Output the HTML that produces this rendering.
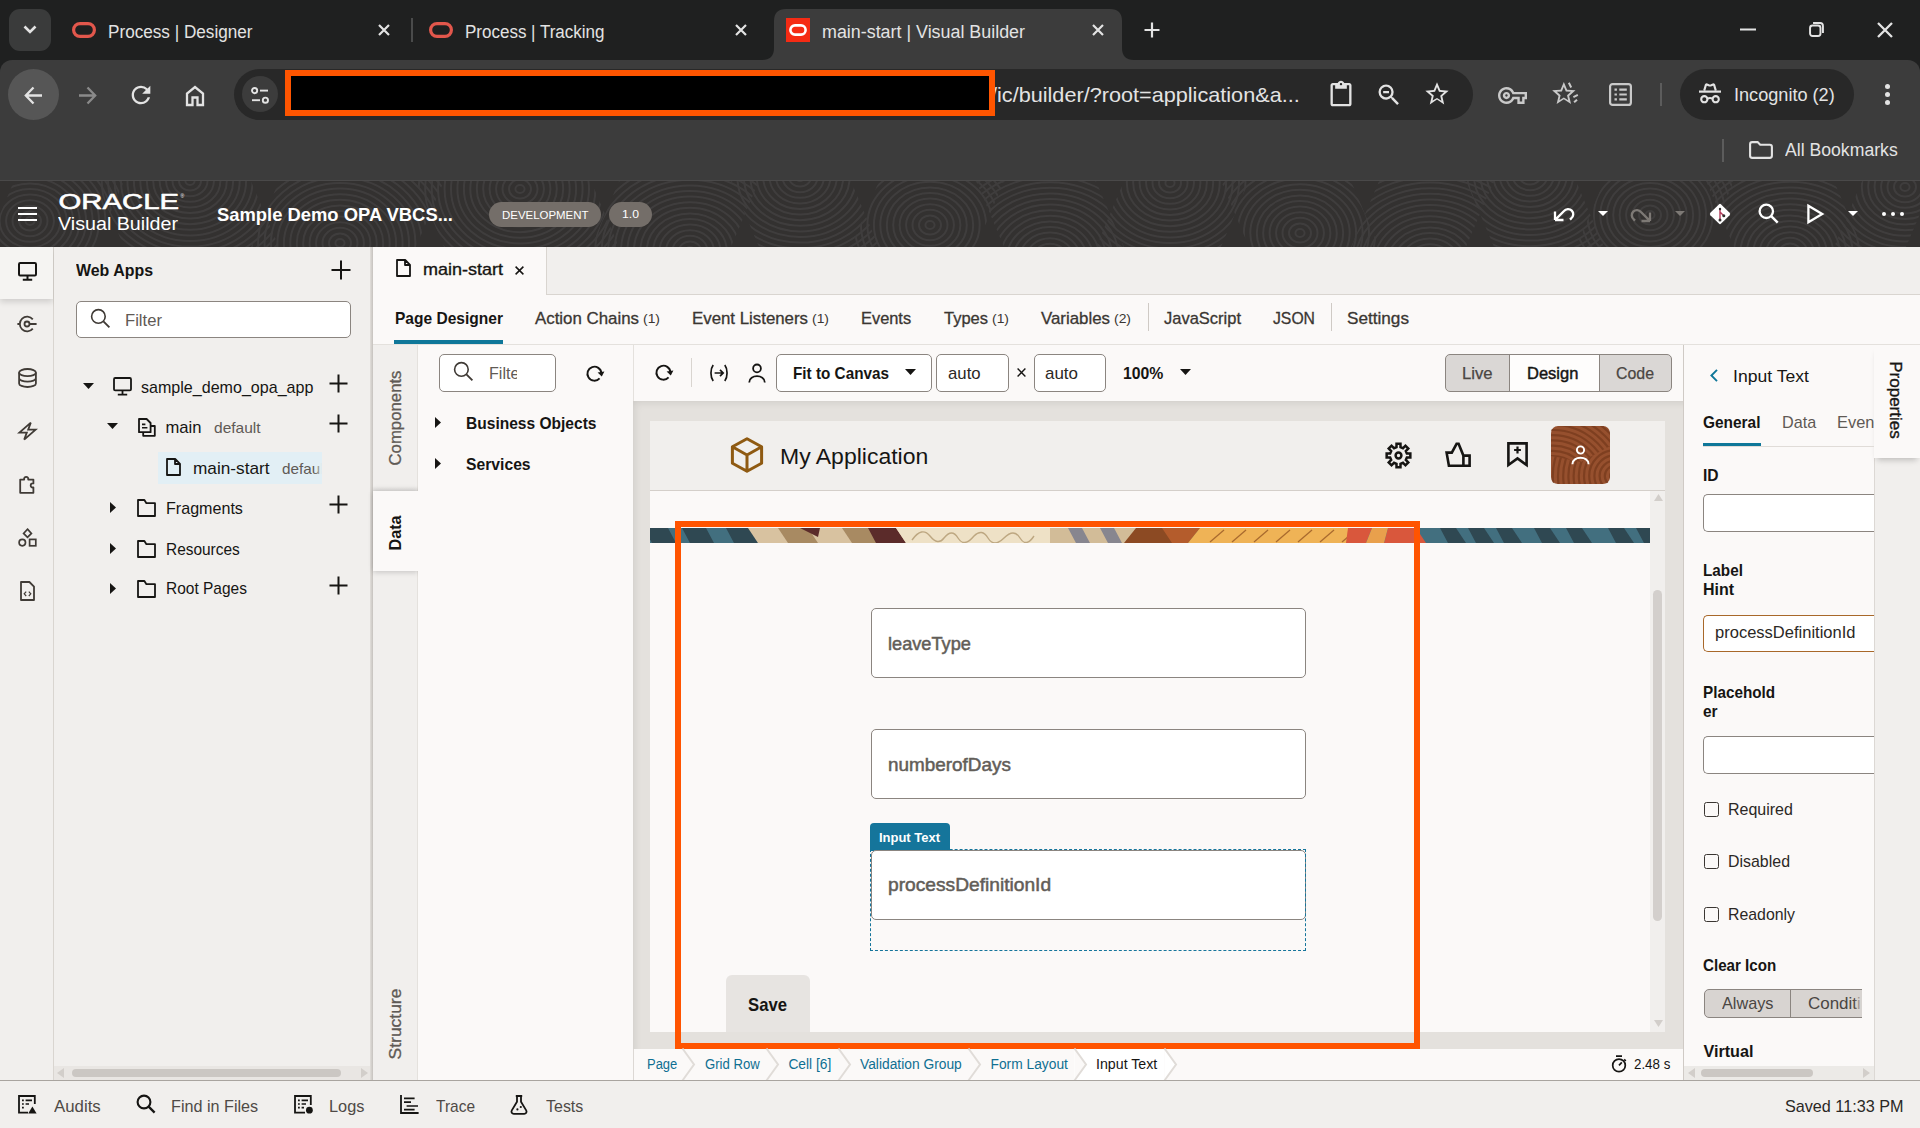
<!DOCTYPE html>
<html lang="en">
<head>
<meta charset="utf-8">
<title>main-start | Visual Builder</title>
<style>
*{box-sizing:border-box;margin:0;padding:0}
html,body{width:1920px;height:1128px;overflow:hidden;background:#f1efed}
body{font-family:"Liberation Sans",sans-serif;color:#161513;font-size:16px;line-height:1}
#root{position:relative;width:1920px;height:1128px;overflow:hidden}
.a{position:absolute}
.t{position:absolute;white-space:nowrap;line-height:1}
svg{position:absolute;overflow:visible}
#tabstrip{left:0;top:0;width:1920px;height:80px;background:#1f2020}
#toolbar{left:0;top:60px;width:1920px;height:120px;background:#3c3c3c;border-top-left-radius:12px;border-top-right-radius:12px}
.ct{color:#e3e3e3;font-size:18px;letter-spacing:-0.35px}
.inp{position:absolute;background:#fff;border:1px solid #8b8580;border-radius:5px}
</style>
</head>
<body>
<div id="root">
<!-- ================= TAB STRIP ================= -->
<div class="a" id="tabstrip"></div>
<div class="a" style="left:9px;top:9px;width:42px;height:42px;border-radius:11px;background:#3a3b3b"></div>
<svg style="left:23px;top:25px" width="14" height="10" viewBox="0 0 14 10"><path d="M1.5 1.5 L7 7 L12.5 1.5" fill="none" stroke="#e3e3e3" stroke-width="2.6"/></svg>

<!-- tab 1 -->
<svg style="left:72px;top:22px" width="24" height="16" viewBox="0 0 24 16"><rect x="1.6" y="1.6" width="20.8" height="12.8" rx="6.4" fill="none" stroke="#e2574c" stroke-width="3.2"/></svg>
<svg style="left:378px;top:24px" width="12" height="12" viewBox="0 0 12 12"><path d="M1 1 L11 11 M11 1 L1 11" stroke="#e3e3e3" stroke-width="2.2" fill="none"/></svg>
<div class="a" style="left:411px;top:18px;width:2px;height:24px;background:#4a4b4b"></div>
<!-- tab 2 -->
<svg style="left:429px;top:22px" width="24" height="16" viewBox="0 0 24 16"><rect x="1.6" y="1.6" width="20.8" height="12.8" rx="6.4" fill="none" stroke="#e2574c" stroke-width="3.2"/></svg>
<svg style="left:735px;top:24px" width="12" height="12" viewBox="0 0 12 12"><path d="M1 1 L11 11 M11 1 L1 11" stroke="#e3e3e3" stroke-width="2.2" fill="none"/></svg>
<!-- active tab -->
<svg style="left:762px;top:9px" width="372" height="51" viewBox="0 0 372 51"><path d="M0 51 C8 51 12 47 12 39 L12 12 C12 4 16 0 24 0 L348 0 C356 0 360 4 360 12 L360 39 C360 47 364 51 372 51 Z" fill="#3c3c3c"/></svg>
<div class="a" style="left:786px;top:18px;width:24px;height:24px;background:#f52b14"></div>
<svg style="left:789px;top:24px" width="18" height="12" viewBox="0 0 18 12"><rect x="1.4" y="1.4" width="15.2" height="9.2" rx="4.6" fill="#f52b14" stroke="#fff" stroke-width="2.6"/></svg>
<svg style="left:1092px;top:24px" width="12" height="12" viewBox="0 0 12 12"><path d="M1 1 L11 11 M11 1 L1 11" stroke="#e3e3e3" stroke-width="2.2" fill="none"/></svg>
<svg style="left:1144px;top:22px" width="16" height="16" viewBox="0 0 16 16"><path d="M8 0.5 V15.5 M0.5 8 H15.5" stroke="#e3e3e3" stroke-width="2.2" fill="none"/></svg>
<!-- window controls -->
<svg style="left:1740px;top:28px" width="16" height="3" viewBox="0 0 16 3"><rect width="16" height="2" y="0.5" fill="#e3e3e3"/></svg>
<svg style="left:1809px;top:22px" width="15" height="15" viewBox="0 0 17 17"><rect x="1.2" y="4" width="11.8" height="11.8" rx="2.8" fill="none" stroke="#e3e3e3" stroke-width="2.2"/><path d="M4.600 1.200 H12.600 a3.200 3.200 0 0 1 3.200 3.200 V12.400" fill="none" stroke="#e3e3e3" stroke-width="2.200"/></svg>
<svg style="left:1877px;top:22px" width="16" height="16" viewBox="0 0 16 16"><path d="M1 1 L15 15 M15 1 L1 15" stroke="#e3e3e3" stroke-width="2.300" fill="none"/></svg>

<!-- ================= TOOLBAR ================= -->
<div class="a" id="toolbar"></div>
<div class="a" style="left:7.500px;top:69px;width:51px;height:51px;border-radius:25.500px;background:#565656"></div>
<!-- back -->
<svg style="left:24px;top:85.500px" width="19" height="19" viewBox="0 0 19 19"><path d="M18 9.5 H2.5 M9.5 1.5 L1.8 9.5 L9.5 17.5" fill="none" stroke="#e3e3e3" stroke-width="2.3"/></svg>
<!-- forward -->
<svg style="left:78px;top:85.500px" width="19" height="19" viewBox="0 0 19 19"><path d="M1 9.5 H16.5 M9.5 1.5 L17.2 9.5 L9.5 17.5" fill="none" stroke="#8a8a8a" stroke-width="2.3"/></svg>
<!-- reload -->
<svg style="left:127px;top:81px" width="28" height="28" viewBox="0 0 24 24"><path fill="#e3e3e3" d="M17.65 6.35A7.958 7.958 0 0012 4c-4.42 0-7.99 3.58-7.99 8s3.57 8 7.99 8c3.73 0 6.84-2.55 7.73-6h-2.08A5.99 5.99 0 0112 18c-3.31 0-6-2.69-6-6s2.69-6 6-6c1.66 0 3.14.69 4.22 1.78L13 11h7V4l-2.35 2.35z"/></svg>
<!-- home -->
<svg style="left:185px;top:85px" width="20" height="21" viewBox="0 0 20 21"><path d="M2 20 V8.5 L10 2 L18 8.5 V20 H12.5 V12.5 H7.5 V20 Z" fill="none" stroke="#e3e3e3" stroke-width="2.3" stroke-linejoin="miter"/></svg>
<!-- omnibox -->
<div class="a" style="left:234px;top:69px;width:1239px;height:51px;border-radius:25.500px;background:#282828"></div>
<div class="a" style="left:242px;top:76px;width:36px;height:36px;border-radius:18px;background:#3c3c3c"></div>
<svg style="left:251px;top:86.500px" width="18" height="17" viewBox="0 0 18 17"><circle cx="3.6" cy="3.6" r="2.6" fill="none" stroke="#e3e3e3" stroke-width="1.9"/><path d="M9 3.6 H17" stroke="#e3e3e3" stroke-width="1.9"/><circle cx="14.4" cy="13.2" r="2.6" fill="none" stroke="#e3e3e3" stroke-width="1.9"/><path d="M1 13.2 H9" stroke="#e3e3e3" stroke-width="1.9"/></svg>
<div class="a" style="left:285px;top:70px;width:710px;height:46px;background:#000;border:6px solid #ff5500"></div>

<!-- omnibox right icons -->
<svg style="left:1327px;top:80px" width="28" height="28" viewBox="0 0 24 24"><path fill="#e3e3e3" d="M19 2.6h-4.18C14.4 1.44 13.3.6 12 .6S9.600 1.440 9.180 2.600H5c-1.1 0-2 .9-2 2v16c0 1.1.9 2 2 2h14c1.1 0 2-.9 2-2v-16c0-1.1-.9-2-2-2zm-7 0c.55 0 1 .45 1 1s-.45 1-1 1-1-.45-1-1 .45-1 1-1zm7 18H5v-16h2v3h10v-3h2v16z"/></svg>
<svg style="left:1375px;top:81px" width="28" height="28" viewBox="0 0 24 24"><path fill="#e3e3e3" d="M15.5 14h-.79l-.28-.27A6.471 6.471 0 0016 9.5 6.5 6.5 0 109.5 16c1.610 0 3.090-.59 4.230-1.570l.27.28v.79l5 4.990L20.490 19l-4.990-5zm-6 0C7.010 14 5 11.990 5 9.500S7.010 5 9.500 5 14 7.010 14 9.500 11.990 14 9.500 14zM7 8.600h5v1.800H7z"/></svg>
<svg style="left:1423px;top:80px" width="28" height="28" viewBox="0 0 24 24"><path fill="#e3e3e3" d="M22 9.240l-7.190-.62L12 2 9.190 8.630 2 9.240l5.460 4.730L5.820 21 12 16.770 18.180 21l-1.630-7.030L22 9.240zM12 15.400l-3.760 2.270 1-4.280-3.320-2.880 4.380-.38L12 6.100l1.710 4.040 4.380.38-3.320 2.880 1 4.280L12 15.400z"/></svg>
<!-- key -->
<svg style="left:1498px;top:81px" width="29" height="29" viewBox="0 0 24 24"><path fill="#c9c9c9" d="M22 19h-6v-4h-2.680c-1.140 2.420-3.600 4-6.320 4-3.860 0-7-3.140-7-7s3.140-7 7-7c2.720 0 5.170 1.580 6.320 4H24v6h-2v4zm-4-2h2v-4h2v-2H11.940l-.23-.67C11.010 8.340 9.110 7 7 7c-2.760 0-5 2.240-5 5s2.240 5 5 5c2.110 0 4.010-1.340 4.710-3.330l.23-.67H18v4zM7 15c-1.650 0-3-1.350-3-3s1.350-3 3-3 3 1.350 3 3-1.350 3-3 3zm0-4c-.55 0-1 .45-1 1s.45 1 1 1 1-.45 1-1-.45-1-1-1z"/></svg>
<!-- star with motion lines -->
<svg style="left:1551px;top:79px" width="28" height="28" viewBox="0 0 24 24"><path fill="#c9c9c9" d="M21 9.740l-7.190-.62L11 2.500 8.190 9.130 1 9.740l5.460 4.730L4.820 21.500 11 17.270 17.180 21.500l-1.630-7.030L21 9.740zM11 15.900l-3.760 2.270 1-4.280-3.320-2.880 4.380-.38L11 6.600l1.710 4.040 4.380.38-3.320 2.880 1 4.280L11 15.900z"/><path d="M15.300 3.200 L17.300 7.300 M19.200 15.600 L23 13.700 M19.800 20 L22.300 17.700" stroke="#c9c9c9" stroke-width="1.7" fill="none"/></svg>
<!-- reading list -->
<svg style="left:1609px;top:83px" width="23" height="23" viewBox="0 0 23 23"><rect x="1.100" y="1.100" width="20.800" height="20.800" rx="2.500" fill="none" stroke="#c9c9c9" stroke-width="2.200"/><path d="M5.500 6.700h2.400M10.300 6.700h7.500M5.500 11.500h2.400M10.300 11.500h7.500M5.500 16.300h2.400M10.300 16.300h7.500" stroke="#c9c9c9" stroke-width="2.200" fill="none"/></svg>
<div class="a" style="left:1660px;top:83px;width:2px;height:23px;background:#5c5c5c"></div>
<!-- incognito pill -->
<div class="a" style="left:1680px;top:69px;width:174px;height:51px;border-radius:25.500px;background:#282828"></div>
<svg style="left:1698px;top:83px" width="24" height="22" viewBox="0 0 24 22"><path d="M6.200 7.600 L7.900 1.900 Q8.100 1.200 8.900 1.500 L10.700 2.300 Q12 2.800 13.300 2.300 L15.100 1.500 Q15.900 1.200 16.100 1.900 L17.800 7.600" fill="none" stroke="#e3e3e3" stroke-width="2.100"/><path d="M1 8.600 H23" stroke="#e3e3e3" stroke-width="2.200"/><circle cx="6.300" cy="16.200" r="3.100" fill="none" stroke="#e3e3e3" stroke-width="2.100"/><circle cx="17.700" cy="16.200" r="3.100" fill="none" stroke="#e3e3e3" stroke-width="2.100"/><path d="M9.400 15.600 Q12 14.300 14.600 15.600" fill="none" stroke="#e3e3e3" stroke-width="2"/></svg>
<!-- kebab -->
<div class="a" style="left:1885px;top:84px;width:5px;height:5px;border-radius:3px;background:#e3e3e3"></div>
<div class="a" style="left:1885px;top:92px;width:5px;height:5px;border-radius:3px;background:#e3e3e3"></div>
<div class="a" style="left:1885px;top:100px;width:5px;height:5px;border-radius:3px;background:#e3e3e3"></div>
<!-- bookmarks bar -->
<div class="a" style="left:1722px;top:139px;width:2px;height:23px;background:#5c5c5c"></div>
<svg style="left:1749px;top:141px" width="24" height="18" viewBox="0 0 24 18"><path d="M1.100 3.200 Q1.100 1.100 3.200 1.100 H8.600 L11.200 3.800 H20.800 Q22.900 3.800 22.900 5.900 V14.800 Q22.900 16.900 20.800 16.900 H3.200 Q1.100 16.900 1.100 14.800 Z" fill="none" stroke="#e3e3e3" stroke-width="2.100"/></svg>
<div class="a" style="left:0;top:179.500px;width:1920px;height:1.500px;background:#4a4949"></div>

<div class="t" style="left:108px;top:23.26px;font-size:18px;color:#e3e3e3;transform:scaleX(0.9523);transform-origin:0 0;">Process | Designer</div>
<div class="t" style="left:465px;top:23.26px;font-size:18px;color:#e3e3e3;transform:scaleX(0.9443);transform-origin:0 0;">Process | Tracking</div>
<div class="t" style="left:822px;top:23.26px;font-size:18px;color:#e3e3e3;transform:scaleX(0.9930);transform-origin:0 0;">main-start | Visual Builder</div>
<div class="a" style="left:995px;top:70px;width:320px;height:48px;overflow:hidden"><div class="t" style="left:-4px;top:13.500px;font-size:21px;color:#e3e3e3;transform:scaleX(1.031);transform-origin:0 0">/ic/builder/?root=application&amp;a...</div></div>
<div class="t" style="left:1734.3px;top:85.96px;font-size:18px;color:#e3e3e3;transform:scaleX(1.0064);transform-origin:0 0;">Incognito (2)</div>
<div class="t" style="left:1785.3px;top:141.06px;font-size:18px;color:#e3e3e3;transform:scaleX(0.9797);transform-origin:0 0;">All Bookmarks</div>
<!-- ================= ORACLE HEADER ================= -->
<div class="a" style="left:0px;top:181px;width:1920px;height:66px;background:#333130;overflow:hidden"></div>
<svg style="left:0;top:181px;overflow:hidden" width="1920" height="66" viewBox="0 0 1920 66"><defs><clipPath id="hc0"><polygon points="14,0 124,0 96,66 -14,66"/></clipPath><clipPath id="hc1"><polygon points="96,0 251,0 279,66 124,66"/></clipPath><clipPath id="hc2"><polygon points="279,0 444,0 416,66 251,66"/></clipPath><clipPath id="hc3"><polygon points="416,0 591,0 619,66 444,66"/></clipPath><clipPath id="hc4"><polygon points="619,0 759,0 731,66 591,66"/></clipPath><clipPath id="hc5"><polygon points="731,0 851,0 879,66 759,66"/></clipPath><clipPath id="hc6"><polygon points="879,0 1004,0 976,66 851,66"/></clipPath><clipPath id="hc7"><polygon points="976,0 1096,0 1124,66 1004,66"/></clipPath><clipPath id="hc8"><polygon points="1124,0 1249,0 1221,66 1096,66"/></clipPath><clipPath id="hc9"><polygon points="1221,0 1351,0 1379,66 1249,66"/></clipPath><clipPath id="hc10"><polygon points="1379,0 1494,0 1466,66 1351,66"/></clipPath><clipPath id="hc11"><polygon points="1466,0 1576,0 1604,66 1494,66"/></clipPath><clipPath id="hc12"><polygon points="1604,0 1734,0 1706,66 1576,66"/></clipPath><clipPath id="hc13"><polygon points="1706,0 1834,0 1862,66 1734,66"/></clipPath><clipPath id="hc14"><polygon points="1862,0 1934,0 1906,66 1834,66"/></clipPath></defs><g fill="none" stroke="#424040" stroke-width="2" opacity="0.85"><g clip-path="url(#hc0)"><ellipse cx="30" cy="40" rx="4.6" ry="4.0"/><ellipse cx="30" cy="40" rx="11.0" ry="9.6"/><ellipse cx="30" cy="40" rx="17.5" ry="15.2"/><ellipse cx="30" cy="40" rx="23.9" ry="20.8"/><ellipse cx="30" cy="40" rx="30.4" ry="26.4"/><ellipse cx="30" cy="40" rx="36.8" ry="32.0"/><ellipse cx="30" cy="40" rx="43.2" ry="37.6"/><ellipse cx="30" cy="40" rx="49.7" ry="43.2"/><ellipse cx="30" cy="40" rx="56.1" ry="48.8"/><ellipse cx="30" cy="40" rx="62.6" ry="54.4"/><ellipse cx="30" cy="40" rx="69.0" ry="60.0"/><ellipse cx="30" cy="40" rx="75.4" ry="65.6"/><ellipse cx="30" cy="40" rx="81.9" ry="71.2"/><ellipse cx="30" cy="40" rx="88.3" ry="76.8"/><ellipse cx="30" cy="40" rx="94.8" ry="82.4"/><ellipse cx="30" cy="40" rx="101.2" ry="88.0"/><ellipse cx="30" cy="40" rx="107.6" ry="93.6"/><ellipse cx="30" cy="40" rx="114.1" ry="99.2"/><ellipse cx="30" cy="40" rx="120.5" ry="104.8"/><ellipse cx="30" cy="40" rx="127.0" ry="110.4"/><ellipse cx="30" cy="40" rx="133.4" ry="116.0"/><ellipse cx="30" cy="40" rx="139.8" ry="121.6"/><ellipse cx="30" cy="40" rx="146.3" ry="127.2"/><ellipse cx="30" cy="40" rx="152.7" ry="132.8"/><ellipse cx="30" cy="40" rx="159.2" ry="138.4"/><ellipse cx="30" cy="40" rx="165.6" ry="144.0"/></g><g clip-path="url(#hc1)"><ellipse cx="190" cy="0" rx="4.6" ry="4.0"/><ellipse cx="190" cy="0" rx="11.0" ry="9.6"/><ellipse cx="190" cy="0" rx="17.5" ry="15.2"/><ellipse cx="190" cy="0" rx="23.9" ry="20.8"/><ellipse cx="190" cy="0" rx="30.4" ry="26.4"/><ellipse cx="190" cy="0" rx="36.8" ry="32.0"/><ellipse cx="190" cy="0" rx="43.2" ry="37.6"/><ellipse cx="190" cy="0" rx="49.7" ry="43.2"/><ellipse cx="190" cy="0" rx="56.1" ry="48.8"/><ellipse cx="190" cy="0" rx="62.6" ry="54.4"/><ellipse cx="190" cy="0" rx="69.0" ry="60.0"/><ellipse cx="190" cy="0" rx="75.4" ry="65.6"/><ellipse cx="190" cy="0" rx="81.9" ry="71.2"/><ellipse cx="190" cy="0" rx="88.3" ry="76.8"/><ellipse cx="190" cy="0" rx="94.8" ry="82.4"/><ellipse cx="190" cy="0" rx="101.2" ry="88.0"/><ellipse cx="190" cy="0" rx="107.6" ry="93.6"/><ellipse cx="190" cy="0" rx="114.1" ry="99.2"/><ellipse cx="190" cy="0" rx="120.5" ry="104.8"/><ellipse cx="190" cy="0" rx="127.0" ry="110.4"/><ellipse cx="190" cy="0" rx="133.4" ry="116.0"/><ellipse cx="190" cy="0" rx="139.8" ry="121.6"/><ellipse cx="190" cy="0" rx="146.3" ry="127.2"/><ellipse cx="190" cy="0" rx="152.7" ry="132.8"/><ellipse cx="190" cy="0" rx="159.2" ry="138.4"/><ellipse cx="190" cy="0" rx="165.6" ry="144.0"/></g><g clip-path="url(#hc2)"><ellipse cx="340" cy="62" rx="4.6" ry="4.0"/><ellipse cx="340" cy="62" rx="11.0" ry="9.6"/><ellipse cx="340" cy="62" rx="17.5" ry="15.2"/><ellipse cx="340" cy="62" rx="23.9" ry="20.8"/><ellipse cx="340" cy="62" rx="30.4" ry="26.4"/><ellipse cx="340" cy="62" rx="36.8" ry="32.0"/><ellipse cx="340" cy="62" rx="43.2" ry="37.6"/><ellipse cx="340" cy="62" rx="49.7" ry="43.2"/><ellipse cx="340" cy="62" rx="56.1" ry="48.8"/><ellipse cx="340" cy="62" rx="62.6" ry="54.4"/><ellipse cx="340" cy="62" rx="69.0" ry="60.0"/><ellipse cx="340" cy="62" rx="75.4" ry="65.6"/><ellipse cx="340" cy="62" rx="81.9" ry="71.2"/><ellipse cx="340" cy="62" rx="88.3" ry="76.8"/><ellipse cx="340" cy="62" rx="94.8" ry="82.4"/><ellipse cx="340" cy="62" rx="101.2" ry="88.0"/><ellipse cx="340" cy="62" rx="107.6" ry="93.6"/><ellipse cx="340" cy="62" rx="114.1" ry="99.2"/><ellipse cx="340" cy="62" rx="120.5" ry="104.8"/><ellipse cx="340" cy="62" rx="127.0" ry="110.4"/><ellipse cx="340" cy="62" rx="133.4" ry="116.0"/><ellipse cx="340" cy="62" rx="139.8" ry="121.6"/><ellipse cx="340" cy="62" rx="146.3" ry="127.2"/><ellipse cx="340" cy="62" rx="152.7" ry="132.8"/><ellipse cx="340" cy="62" rx="159.2" ry="138.4"/><ellipse cx="340" cy="62" rx="165.6" ry="144.0"/></g><g clip-path="url(#hc3)"><ellipse cx="520" cy="8" rx="4.6" ry="4.0"/><ellipse cx="520" cy="8" rx="11.0" ry="9.6"/><ellipse cx="520" cy="8" rx="17.5" ry="15.2"/><ellipse cx="520" cy="8" rx="23.9" ry="20.8"/><ellipse cx="520" cy="8" rx="30.4" ry="26.4"/><ellipse cx="520" cy="8" rx="36.8" ry="32.0"/><ellipse cx="520" cy="8" rx="43.2" ry="37.6"/><ellipse cx="520" cy="8" rx="49.7" ry="43.2"/><ellipse cx="520" cy="8" rx="56.1" ry="48.8"/><ellipse cx="520" cy="8" rx="62.6" ry="54.4"/><ellipse cx="520" cy="8" rx="69.0" ry="60.0"/><ellipse cx="520" cy="8" rx="75.4" ry="65.6"/><ellipse cx="520" cy="8" rx="81.9" ry="71.2"/><ellipse cx="520" cy="8" rx="88.3" ry="76.8"/><ellipse cx="520" cy="8" rx="94.8" ry="82.4"/><ellipse cx="520" cy="8" rx="101.2" ry="88.0"/><ellipse cx="520" cy="8" rx="107.6" ry="93.6"/><ellipse cx="520" cy="8" rx="114.1" ry="99.2"/><ellipse cx="520" cy="8" rx="120.5" ry="104.8"/><ellipse cx="520" cy="8" rx="127.0" ry="110.4"/><ellipse cx="520" cy="8" rx="133.4" ry="116.0"/><ellipse cx="520" cy="8" rx="139.8" ry="121.6"/><ellipse cx="520" cy="8" rx="146.3" ry="127.2"/><ellipse cx="520" cy="8" rx="152.7" ry="132.8"/><ellipse cx="520" cy="8" rx="159.2" ry="138.4"/><ellipse cx="520" cy="8" rx="165.6" ry="144.0"/></g><g clip-path="url(#hc4)"><ellipse cx="690" cy="70" rx="4.6" ry="4.0"/><ellipse cx="690" cy="70" rx="11.0" ry="9.6"/><ellipse cx="690" cy="70" rx="17.5" ry="15.2"/><ellipse cx="690" cy="70" rx="23.9" ry="20.8"/><ellipse cx="690" cy="70" rx="30.4" ry="26.4"/><ellipse cx="690" cy="70" rx="36.8" ry="32.0"/><ellipse cx="690" cy="70" rx="43.2" ry="37.6"/><ellipse cx="690" cy="70" rx="49.7" ry="43.2"/><ellipse cx="690" cy="70" rx="56.1" ry="48.8"/><ellipse cx="690" cy="70" rx="62.6" ry="54.4"/><ellipse cx="690" cy="70" rx="69.0" ry="60.0"/><ellipse cx="690" cy="70" rx="75.4" ry="65.6"/><ellipse cx="690" cy="70" rx="81.9" ry="71.2"/><ellipse cx="690" cy="70" rx="88.3" ry="76.8"/><ellipse cx="690" cy="70" rx="94.8" ry="82.4"/><ellipse cx="690" cy="70" rx="101.2" ry="88.0"/><ellipse cx="690" cy="70" rx="107.6" ry="93.6"/><ellipse cx="690" cy="70" rx="114.1" ry="99.2"/><ellipse cx="690" cy="70" rx="120.5" ry="104.8"/><ellipse cx="690" cy="70" rx="127.0" ry="110.4"/><ellipse cx="690" cy="70" rx="133.4" ry="116.0"/><ellipse cx="690" cy="70" rx="139.8" ry="121.6"/><ellipse cx="690" cy="70" rx="146.3" ry="127.2"/><ellipse cx="690" cy="70" rx="152.7" ry="132.8"/><ellipse cx="690" cy="70" rx="159.2" ry="138.4"/><ellipse cx="690" cy="70" rx="165.6" ry="144.0"/></g><g clip-path="url(#hc5)"><ellipse cx="800" cy="-4" rx="4.6" ry="4.0"/><ellipse cx="800" cy="-4" rx="11.0" ry="9.6"/><ellipse cx="800" cy="-4" rx="17.5" ry="15.2"/><ellipse cx="800" cy="-4" rx="23.9" ry="20.8"/><ellipse cx="800" cy="-4" rx="30.4" ry="26.4"/><ellipse cx="800" cy="-4" rx="36.8" ry="32.0"/><ellipse cx="800" cy="-4" rx="43.2" ry="37.6"/><ellipse cx="800" cy="-4" rx="49.7" ry="43.2"/><ellipse cx="800" cy="-4" rx="56.1" ry="48.8"/><ellipse cx="800" cy="-4" rx="62.6" ry="54.4"/><ellipse cx="800" cy="-4" rx="69.0" ry="60.0"/><ellipse cx="800" cy="-4" rx="75.4" ry="65.6"/><ellipse cx="800" cy="-4" rx="81.9" ry="71.2"/><ellipse cx="800" cy="-4" rx="88.3" ry="76.8"/><ellipse cx="800" cy="-4" rx="94.8" ry="82.4"/><ellipse cx="800" cy="-4" rx="101.2" ry="88.0"/><ellipse cx="800" cy="-4" rx="107.6" ry="93.6"/><ellipse cx="800" cy="-4" rx="114.1" ry="99.2"/><ellipse cx="800" cy="-4" rx="120.5" ry="104.8"/><ellipse cx="800" cy="-4" rx="127.0" ry="110.4"/><ellipse cx="800" cy="-4" rx="133.4" ry="116.0"/><ellipse cx="800" cy="-4" rx="139.8" ry="121.6"/><ellipse cx="800" cy="-4" rx="146.3" ry="127.2"/><ellipse cx="800" cy="-4" rx="152.7" ry="132.8"/><ellipse cx="800" cy="-4" rx="159.2" ry="138.4"/><ellipse cx="800" cy="-4" rx="165.6" ry="144.0"/></g><g clip-path="url(#hc6)"><ellipse cx="930" cy="44" rx="4.6" ry="4.0"/><ellipse cx="930" cy="44" rx="11.0" ry="9.6"/><ellipse cx="930" cy="44" rx="17.5" ry="15.2"/><ellipse cx="930" cy="44" rx="23.9" ry="20.8"/><ellipse cx="930" cy="44" rx="30.4" ry="26.4"/><ellipse cx="930" cy="44" rx="36.8" ry="32.0"/><ellipse cx="930" cy="44" rx="43.2" ry="37.6"/><ellipse cx="930" cy="44" rx="49.7" ry="43.2"/><ellipse cx="930" cy="44" rx="56.1" ry="48.8"/><ellipse cx="930" cy="44" rx="62.6" ry="54.4"/><ellipse cx="930" cy="44" rx="69.0" ry="60.0"/><ellipse cx="930" cy="44" rx="75.4" ry="65.6"/><ellipse cx="930" cy="44" rx="81.9" ry="71.2"/><ellipse cx="930" cy="44" rx="88.3" ry="76.8"/><ellipse cx="930" cy="44" rx="94.8" ry="82.4"/><ellipse cx="930" cy="44" rx="101.2" ry="88.0"/><ellipse cx="930" cy="44" rx="107.6" ry="93.6"/><ellipse cx="930" cy="44" rx="114.1" ry="99.2"/><ellipse cx="930" cy="44" rx="120.5" ry="104.8"/><ellipse cx="930" cy="44" rx="127.0" ry="110.4"/><ellipse cx="930" cy="44" rx="133.4" ry="116.0"/><ellipse cx="930" cy="44" rx="139.8" ry="121.6"/><ellipse cx="930" cy="44" rx="146.3" ry="127.2"/><ellipse cx="930" cy="44" rx="152.7" ry="132.8"/><ellipse cx="930" cy="44" rx="159.2" ry="138.4"/><ellipse cx="930" cy="44" rx="165.6" ry="144.0"/></g><g clip-path="url(#hc7)"><ellipse cx="1050" cy="78" rx="4.6" ry="4.0"/><ellipse cx="1050" cy="78" rx="11.0" ry="9.6"/><ellipse cx="1050" cy="78" rx="17.5" ry="15.2"/><ellipse cx="1050" cy="78" rx="23.9" ry="20.8"/><ellipse cx="1050" cy="78" rx="30.4" ry="26.4"/><ellipse cx="1050" cy="78" rx="36.8" ry="32.0"/><ellipse cx="1050" cy="78" rx="43.2" ry="37.6"/><ellipse cx="1050" cy="78" rx="49.7" ry="43.2"/><ellipse cx="1050" cy="78" rx="56.1" ry="48.8"/><ellipse cx="1050" cy="78" rx="62.6" ry="54.4"/><ellipse cx="1050" cy="78" rx="69.0" ry="60.0"/><ellipse cx="1050" cy="78" rx="75.4" ry="65.6"/><ellipse cx="1050" cy="78" rx="81.9" ry="71.2"/><ellipse cx="1050" cy="78" rx="88.3" ry="76.8"/><ellipse cx="1050" cy="78" rx="94.8" ry="82.4"/><ellipse cx="1050" cy="78" rx="101.2" ry="88.0"/><ellipse cx="1050" cy="78" rx="107.6" ry="93.6"/><ellipse cx="1050" cy="78" rx="114.1" ry="99.2"/><ellipse cx="1050" cy="78" rx="120.5" ry="104.8"/><ellipse cx="1050" cy="78" rx="127.0" ry="110.4"/><ellipse cx="1050" cy="78" rx="133.4" ry="116.0"/><ellipse cx="1050" cy="78" rx="139.8" ry="121.6"/><ellipse cx="1050" cy="78" rx="146.3" ry="127.2"/><ellipse cx="1050" cy="78" rx="152.7" ry="132.8"/><ellipse cx="1050" cy="78" rx="159.2" ry="138.4"/><ellipse cx="1050" cy="78" rx="165.6" ry="144.0"/></g><g clip-path="url(#hc8)"><ellipse cx="1170" cy="2" rx="4.6" ry="4.0"/><ellipse cx="1170" cy="2" rx="11.0" ry="9.6"/><ellipse cx="1170" cy="2" rx="17.5" ry="15.2"/><ellipse cx="1170" cy="2" rx="23.9" ry="20.8"/><ellipse cx="1170" cy="2" rx="30.4" ry="26.4"/><ellipse cx="1170" cy="2" rx="36.8" ry="32.0"/><ellipse cx="1170" cy="2" rx="43.2" ry="37.6"/><ellipse cx="1170" cy="2" rx="49.7" ry="43.2"/><ellipse cx="1170" cy="2" rx="56.1" ry="48.8"/><ellipse cx="1170" cy="2" rx="62.6" ry="54.4"/><ellipse cx="1170" cy="2" rx="69.0" ry="60.0"/><ellipse cx="1170" cy="2" rx="75.4" ry="65.6"/><ellipse cx="1170" cy="2" rx="81.9" ry="71.2"/><ellipse cx="1170" cy="2" rx="88.3" ry="76.8"/><ellipse cx="1170" cy="2" rx="94.8" ry="82.4"/><ellipse cx="1170" cy="2" rx="101.2" ry="88.0"/><ellipse cx="1170" cy="2" rx="107.6" ry="93.6"/><ellipse cx="1170" cy="2" rx="114.1" ry="99.2"/><ellipse cx="1170" cy="2" rx="120.5" ry="104.8"/><ellipse cx="1170" cy="2" rx="127.0" ry="110.4"/><ellipse cx="1170" cy="2" rx="133.4" ry="116.0"/><ellipse cx="1170" cy="2" rx="139.8" ry="121.6"/><ellipse cx="1170" cy="2" rx="146.3" ry="127.2"/><ellipse cx="1170" cy="2" rx="152.7" ry="132.8"/><ellipse cx="1170" cy="2" rx="159.2" ry="138.4"/><ellipse cx="1170" cy="2" rx="165.6" ry="144.0"/></g><g clip-path="url(#hc9)"><ellipse cx="1300" cy="52" rx="4.6" ry="4.0"/><ellipse cx="1300" cy="52" rx="11.0" ry="9.6"/><ellipse cx="1300" cy="52" rx="17.5" ry="15.2"/><ellipse cx="1300" cy="52" rx="23.9" ry="20.8"/><ellipse cx="1300" cy="52" rx="30.4" ry="26.4"/><ellipse cx="1300" cy="52" rx="36.8" ry="32.0"/><ellipse cx="1300" cy="52" rx="43.2" ry="37.6"/><ellipse cx="1300" cy="52" rx="49.7" ry="43.2"/><ellipse cx="1300" cy="52" rx="56.1" ry="48.8"/><ellipse cx="1300" cy="52" rx="62.6" ry="54.4"/><ellipse cx="1300" cy="52" rx="69.0" ry="60.0"/><ellipse cx="1300" cy="52" rx="75.4" ry="65.6"/><ellipse cx="1300" cy="52" rx="81.9" ry="71.2"/><ellipse cx="1300" cy="52" rx="88.3" ry="76.8"/><ellipse cx="1300" cy="52" rx="94.8" ry="82.4"/><ellipse cx="1300" cy="52" rx="101.2" ry="88.0"/><ellipse cx="1300" cy="52" rx="107.6" ry="93.6"/><ellipse cx="1300" cy="52" rx="114.1" ry="99.2"/><ellipse cx="1300" cy="52" rx="120.5" ry="104.8"/><ellipse cx="1300" cy="52" rx="127.0" ry="110.4"/><ellipse cx="1300" cy="52" rx="133.4" ry="116.0"/><ellipse cx="1300" cy="52" rx="139.8" ry="121.6"/><ellipse cx="1300" cy="52" rx="146.3" ry="127.2"/><ellipse cx="1300" cy="52" rx="152.7" ry="132.8"/><ellipse cx="1300" cy="52" rx="159.2" ry="138.4"/><ellipse cx="1300" cy="52" rx="165.6" ry="144.0"/></g><g clip-path="url(#hc10)"><ellipse cx="1430" cy="84" rx="4.6" ry="4.0"/><ellipse cx="1430" cy="84" rx="11.0" ry="9.6"/><ellipse cx="1430" cy="84" rx="17.5" ry="15.2"/><ellipse cx="1430" cy="84" rx="23.9" ry="20.8"/><ellipse cx="1430" cy="84" rx="30.4" ry="26.4"/><ellipse cx="1430" cy="84" rx="36.8" ry="32.0"/><ellipse cx="1430" cy="84" rx="43.2" ry="37.6"/><ellipse cx="1430" cy="84" rx="49.7" ry="43.2"/><ellipse cx="1430" cy="84" rx="56.1" ry="48.8"/><ellipse cx="1430" cy="84" rx="62.6" ry="54.4"/><ellipse cx="1430" cy="84" rx="69.0" ry="60.0"/><ellipse cx="1430" cy="84" rx="75.4" ry="65.6"/><ellipse cx="1430" cy="84" rx="81.9" ry="71.2"/><ellipse cx="1430" cy="84" rx="88.3" ry="76.8"/><ellipse cx="1430" cy="84" rx="94.8" ry="82.4"/><ellipse cx="1430" cy="84" rx="101.2" ry="88.0"/><ellipse cx="1430" cy="84" rx="107.6" ry="93.6"/><ellipse cx="1430" cy="84" rx="114.1" ry="99.2"/><ellipse cx="1430" cy="84" rx="120.5" ry="104.8"/><ellipse cx="1430" cy="84" rx="127.0" ry="110.4"/><ellipse cx="1430" cy="84" rx="133.4" ry="116.0"/><ellipse cx="1430" cy="84" rx="139.8" ry="121.6"/><ellipse cx="1430" cy="84" rx="146.3" ry="127.2"/><ellipse cx="1430" cy="84" rx="152.7" ry="132.8"/><ellipse cx="1430" cy="84" rx="159.2" ry="138.4"/><ellipse cx="1430" cy="84" rx="165.6" ry="144.0"/></g><g clip-path="url(#hc11)"><ellipse cx="1530" cy="-6" rx="4.6" ry="4.0"/><ellipse cx="1530" cy="-6" rx="11.0" ry="9.6"/><ellipse cx="1530" cy="-6" rx="17.5" ry="15.2"/><ellipse cx="1530" cy="-6" rx="23.9" ry="20.8"/><ellipse cx="1530" cy="-6" rx="30.4" ry="26.4"/><ellipse cx="1530" cy="-6" rx="36.8" ry="32.0"/><ellipse cx="1530" cy="-6" rx="43.2" ry="37.6"/><ellipse cx="1530" cy="-6" rx="49.7" ry="43.2"/><ellipse cx="1530" cy="-6" rx="56.1" ry="48.8"/><ellipse cx="1530" cy="-6" rx="62.6" ry="54.4"/><ellipse cx="1530" cy="-6" rx="69.0" ry="60.0"/><ellipse cx="1530" cy="-6" rx="75.4" ry="65.6"/><ellipse cx="1530" cy="-6" rx="81.9" ry="71.2"/><ellipse cx="1530" cy="-6" rx="88.3" ry="76.8"/><ellipse cx="1530" cy="-6" rx="94.8" ry="82.4"/><ellipse cx="1530" cy="-6" rx="101.2" ry="88.0"/><ellipse cx="1530" cy="-6" rx="107.6" ry="93.6"/><ellipse cx="1530" cy="-6" rx="114.1" ry="99.2"/><ellipse cx="1530" cy="-6" rx="120.5" ry="104.8"/><ellipse cx="1530" cy="-6" rx="127.0" ry="110.4"/><ellipse cx="1530" cy="-6" rx="133.4" ry="116.0"/><ellipse cx="1530" cy="-6" rx="139.8" ry="121.6"/><ellipse cx="1530" cy="-6" rx="146.3" ry="127.2"/><ellipse cx="1530" cy="-6" rx="152.7" ry="132.8"/><ellipse cx="1530" cy="-6" rx="159.2" ry="138.4"/><ellipse cx="1530" cy="-6" rx="165.6" ry="144.0"/></g><g clip-path="url(#hc12)"><ellipse cx="1650" cy="34" rx="4.6" ry="4.0"/><ellipse cx="1650" cy="34" rx="11.0" ry="9.6"/><ellipse cx="1650" cy="34" rx="17.5" ry="15.2"/><ellipse cx="1650" cy="34" rx="23.9" ry="20.8"/><ellipse cx="1650" cy="34" rx="30.4" ry="26.4"/><ellipse cx="1650" cy="34" rx="36.8" ry="32.0"/><ellipse cx="1650" cy="34" rx="43.2" ry="37.6"/><ellipse cx="1650" cy="34" rx="49.7" ry="43.2"/><ellipse cx="1650" cy="34" rx="56.1" ry="48.8"/><ellipse cx="1650" cy="34" rx="62.6" ry="54.4"/><ellipse cx="1650" cy="34" rx="69.0" ry="60.0"/><ellipse cx="1650" cy="34" rx="75.4" ry="65.6"/><ellipse cx="1650" cy="34" rx="81.9" ry="71.2"/><ellipse cx="1650" cy="34" rx="88.3" ry="76.8"/><ellipse cx="1650" cy="34" rx="94.8" ry="82.4"/><ellipse cx="1650" cy="34" rx="101.2" ry="88.0"/><ellipse cx="1650" cy="34" rx="107.6" ry="93.6"/><ellipse cx="1650" cy="34" rx="114.1" ry="99.2"/><ellipse cx="1650" cy="34" rx="120.5" ry="104.8"/><ellipse cx="1650" cy="34" rx="127.0" ry="110.4"/><ellipse cx="1650" cy="34" rx="133.4" ry="116.0"/><ellipse cx="1650" cy="34" rx="139.8" ry="121.6"/><ellipse cx="1650" cy="34" rx="146.3" ry="127.2"/><ellipse cx="1650" cy="34" rx="152.7" ry="132.8"/><ellipse cx="1650" cy="34" rx="159.2" ry="138.4"/><ellipse cx="1650" cy="34" rx="165.6" ry="144.0"/></g><g clip-path="url(#hc13)"><ellipse cx="1790" cy="72" rx="4.6" ry="4.0"/><ellipse cx="1790" cy="72" rx="11.0" ry="9.6"/><ellipse cx="1790" cy="72" rx="17.5" ry="15.2"/><ellipse cx="1790" cy="72" rx="23.9" ry="20.8"/><ellipse cx="1790" cy="72" rx="30.4" ry="26.4"/><ellipse cx="1790" cy="72" rx="36.8" ry="32.0"/><ellipse cx="1790" cy="72" rx="43.2" ry="37.6"/><ellipse cx="1790" cy="72" rx="49.7" ry="43.2"/><ellipse cx="1790" cy="72" rx="56.1" ry="48.8"/><ellipse cx="1790" cy="72" rx="62.6" ry="54.4"/><ellipse cx="1790" cy="72" rx="69.0" ry="60.0"/><ellipse cx="1790" cy="72" rx="75.4" ry="65.6"/><ellipse cx="1790" cy="72" rx="81.9" ry="71.2"/><ellipse cx="1790" cy="72" rx="88.3" ry="76.8"/><ellipse cx="1790" cy="72" rx="94.8" ry="82.4"/><ellipse cx="1790" cy="72" rx="101.2" ry="88.0"/><ellipse cx="1790" cy="72" rx="107.6" ry="93.6"/><ellipse cx="1790" cy="72" rx="114.1" ry="99.2"/><ellipse cx="1790" cy="72" rx="120.5" ry="104.8"/><ellipse cx="1790" cy="72" rx="127.0" ry="110.4"/><ellipse cx="1790" cy="72" rx="133.4" ry="116.0"/><ellipse cx="1790" cy="72" rx="139.8" ry="121.6"/><ellipse cx="1790" cy="72" rx="146.3" ry="127.2"/><ellipse cx="1790" cy="72" rx="152.7" ry="132.8"/><ellipse cx="1790" cy="72" rx="159.2" ry="138.4"/><ellipse cx="1790" cy="72" rx="165.6" ry="144.0"/></g><g clip-path="url(#hc14)"><ellipse cx="1905" cy="6" rx="4.6" ry="4.0"/><ellipse cx="1905" cy="6" rx="11.0" ry="9.6"/><ellipse cx="1905" cy="6" rx="17.5" ry="15.2"/><ellipse cx="1905" cy="6" rx="23.9" ry="20.8"/><ellipse cx="1905" cy="6" rx="30.4" ry="26.4"/><ellipse cx="1905" cy="6" rx="36.8" ry="32.0"/><ellipse cx="1905" cy="6" rx="43.2" ry="37.6"/><ellipse cx="1905" cy="6" rx="49.7" ry="43.2"/><ellipse cx="1905" cy="6" rx="56.1" ry="48.8"/><ellipse cx="1905" cy="6" rx="62.6" ry="54.4"/><ellipse cx="1905" cy="6" rx="69.0" ry="60.0"/><ellipse cx="1905" cy="6" rx="75.4" ry="65.6"/><ellipse cx="1905" cy="6" rx="81.9" ry="71.2"/><ellipse cx="1905" cy="6" rx="88.3" ry="76.8"/><ellipse cx="1905" cy="6" rx="94.8" ry="82.4"/><ellipse cx="1905" cy="6" rx="101.2" ry="88.0"/><ellipse cx="1905" cy="6" rx="107.6" ry="93.6"/><ellipse cx="1905" cy="6" rx="114.1" ry="99.2"/><ellipse cx="1905" cy="6" rx="120.5" ry="104.8"/><ellipse cx="1905" cy="6" rx="127.0" ry="110.4"/><ellipse cx="1905" cy="6" rx="133.4" ry="116.0"/><ellipse cx="1905" cy="6" rx="139.8" ry="121.6"/><ellipse cx="1905" cy="6" rx="146.3" ry="127.2"/><ellipse cx="1905" cy="6" rx="152.7" ry="132.8"/><ellipse cx="1905" cy="6" rx="159.2" ry="138.4"/><ellipse cx="1905" cy="6" rx="165.6" ry="144.0"/></g></g></svg>
<div class="a" style="left:18px;top:207px;width:19px;height:2px;background:#fff"></div>
<div class="a" style="left:18px;top:213px;width:19px;height:2px;background:#fff"></div>
<div class="a" style="left:18px;top:219px;width:19px;height:2px;background:#fff"></div>
<svg style="left:58px;top:193px" width="128" height="17" viewBox="0 0 128 17"><text x="0.5" y="15.7" font-family="Liberation Sans, sans-serif" font-size="21.8" fill="#fff" stroke="#fff" stroke-width="0.55" stroke-linejoin="round" textLength="120.5" lengthAdjust="spacingAndGlyphs">ORACLE</text><text x="122.5" y="5" font-family="Liberation Sans, sans-serif" font-size="5" fill="#fff">®</text></svg>
<div class="t" style="left:58px;top:214.05px;font-size:19.2px;color:#fff;transform:scaleX(1.0258);transform-origin:0 0;">Visual Builder</div>
<div class="t" style="left:217px;top:205.96px;font-size:18.6px;font-weight:700;color:#fff;transform:scaleX(0.9887);transform-origin:0 0;">Sample Demo OPA VBCS...</div>
<div class="a" style="left:489px;top:202px;width:112px;height:25px;background:#746e69;border-radius:13px"></div>
<div class="t" style="left:501.5px;top:208.98px;font-size:11.6px;color:#fff;transform:scaleX(0.9872);transform-origin:0 0;">DEVELOPMENT</div>
<div class="a" style="left:609px;top:202px;width:43px;height:25px;background:#746e69;border-radius:13px"></div>
<div class="t" style="left:622px;top:208.81px;font-size:11.8px;color:#fff;transform:scaleX(1.0362);transform-origin:0 0;">1.0</div>
<svg style="left:1553px;top:203px;" width="21" height="19" viewBox="0 0 21 19"><path d="M2 17 H10.5 M2 17 V8.5 M2.4 16.6 L11 8 a5.2 5.2 0 1 1 7.2 7.4 L17 16.6" fill="none" stroke="#ffffff" stroke-width="2.3"/></svg>
<svg style="left:1598px;top:211px;" width="10" height="5" viewBox="0 0 10 5"><path d="M0 0 H10 L5 5 Z" fill="#ffffff"/></svg>
<svg style="left:1631px;top:203.5px;" width="21" height="19" viewBox="0 0 21 19"><path d="M19 17 H10.500 M19 17 V8.5 M18.6 16.600 L10 8 a5.2 5.2 0 1 0 -7.2 7.4 L4 16.6" fill="none" stroke="#7d7975" stroke-width="2.3"/></svg>
<svg style="left:1675px;top:211px;" width="10" height="5" viewBox="0 0 10 5"><path d="M0 0 H10 L5 5 Z" fill="#7d7975"/></svg>
<svg style="left:1709px;top:203px;" width="22" height="22" viewBox="0 0 22 22"><rect x="3.4" y="3.4" width="15.2" height="15.200" rx="1.6" transform="rotate(45 11 11)" fill="#ffffff"/><path d="M11 5 V17 M11 9 L14.500 12.500" stroke="#b23a5a" stroke-width="1.4" fill="none"/><circle cx="11" cy="17" r="1.5" fill="#333130"/><circle cx="14.800" cy="12.800" r="1.5" fill="#333130"/><circle cx="11" cy="6" r="1.2" fill="#333130"/></svg>
<svg style="left:1758px;top:203px;" width="21" height="21" viewBox="0 0 21 21"><circle cx="8.300" cy="8.300" r="6.700" fill="none" stroke="#ffffff" stroke-width="2.300"/><path d="M13.200 13.200 L19.700 19.700" stroke="#ffffff" stroke-width="2.500"/></svg>
<svg style="left:1807px;top:204px;" width="17" height="20" viewBox="0 0 17 20"><path d="M1.400 1.800 L15.200 10 L1.400 18.200 Z" fill="none" stroke="#ffffff" stroke-width="2.300" stroke-linejoin="miter"/></svg>
<svg style="left:1848px;top:211px;" width="10" height="5" viewBox="0 0 10 5"><path d="M0 0 H10 L5 5 Z" fill="#ffffff"/></svg>
<div class="a" style="left:1882px;top:212px;width:4px;height:4px;background:#fff;border-radius:2px"></div>
<div class="a" style="left:1891px;top:212px;width:4px;height:4px;background:#fff;border-radius:2px"></div>
<div class="a" style="left:1900px;top:212px;width:4px;height:4px;background:#fff;border-radius:2px"></div>
<!-- ================= ICON RAIL ================= -->
<div class="a" style="left:0px;top:247px;width:54px;height:833px;background:#f1efed;border-right:1px solid #d9d5d0"></div>
<div class="a" style="left:0px;top:247px;width:53px;height:52px;background:#f5f4f2;box-shadow:0 3px 6px rgba(0,0,0,.14)"></div>
<svg style="left:18px;top:262px;" width="19" height="19" viewBox="0 0 19 19"><rect x="1" y="1" width="17" height="12.4" rx="1.2" fill="none" stroke="#161513" stroke-width="2"/><path d="M9.500 13.400 V17.500 M4.800 17.800 H14.200" stroke="#161513" stroke-width="2" fill="none"/></svg>
<svg style="left:17px;top:314px;" width="20" height="20" viewBox="0 0 20 20"><path d="M15.800 14.600 A7.300 7.300 0 1 1 15.800 5.400" fill="none" stroke="#403b36" stroke-width="1.800"/><circle cx="10" cy="10" r="2.500" fill="none" stroke="#403b36" stroke-width="1.800"/><path d="M12.500 10 H19.600 M0.400 10 H2.800" stroke="#403b36" stroke-width="1.800"/></svg>
<svg style="left:18px;top:368px;" width="19" height="20" viewBox="0 0 19 20"><ellipse cx="9.500" cy="4.600" rx="8.400" ry="3.600" fill="none" stroke="#403b36" stroke-width="1.800"/><path d="M1.100 4.600 V15.400 C1.100 17.400 4.900 19 9.500 19 S17.900 17.400 17.900 15.400 V4.600 M1.100 10 C1.100 12 4.900 13.600 9.500 13.600 S17.900 12 17.900 10" fill="none" stroke="#403b36" stroke-width="1.800"/></svg>
<svg style="left:18px;top:421px;" width="19" height="20" viewBox="0 0 19 20"><path d="M12.800 1.600 L1.400 11.600 H8.800 L6.200 18.600 L17.600 8.600 H10.200 Z" fill="none" stroke="#403b36" stroke-width="1.800" stroke-linejoin="miter"/></svg>
<svg style="left:19px;top:474px;" width="18" height="20" viewBox="0 0 18 20"><path d="M1.200 18.800 V5.600 H5.200 C4.200 2 10.200 2 9.200 5.600 H14.400 V9.400 C10.800 8.400 10.800 14.400 14.400 13.400 V18.800 Z" fill="none" stroke="#403b36" stroke-width="1.800" stroke-linejoin="round"/></svg>
<svg style="left:18px;top:528px;" width="19" height="19" viewBox="0 0 19 19"><path d="M9.500 1.200 L13.400 5.400 L9.500 9.400 L5.600 5.400 Z" fill="none" stroke="#403b36" stroke-width="1.700"/><circle cx="4.300" cy="14.600" r="3.200" fill="none" stroke="#403b36" stroke-width="1.700"/><rect x="11.600" y="11.400" width="6.200" height="6.400" fill="none" stroke="#403b36" stroke-width="1.700"/></svg>
<svg style="left:20px;top:581px;" width="15" height="20" viewBox="0 0 15 20"><path d="M1 1 H9.400 L14 5.600 V19 H1 Z" fill="none" stroke="#403b36" stroke-width="1.800" stroke-linejoin="round"/><path d="M6.200 10.600 L4.200 12.800 L6.200 15 M8.800 10.600 L10.800 12.800 L8.800 15" fill="none" stroke="#403b36" stroke-width="1.200"/></svg>
<!-- ================= NAVIGATOR ================= -->
<div class="a" style="left:54px;top:247px;width:316px;height:833px;background:#f1efed"></div>
<div class="a" style="left:370px;top:247px;width:3px;height:833px;background:linear-gradient(90deg,#e2dfdb,#c6c2be)"></div>
<div class="t" style="left:76px;top:262.09px;font-size:16.2px;font-weight:700;transform:scaleX(0.9840);transform-origin:0 0;">Web Apps</div>
<svg style="left:330.5px;top:260.0px;" width="20" height="20" viewBox="0 0 20 20"><path d="M10.0 0.500 V19.5 M0.500 10.0 H19.5" stroke="#161513" stroke-width="2" fill="none"/></svg>
<div class="inp" style="left:76px;top:301px;width:275px;height:37px"></div>
<svg style="left:90px;top:308px;" width="21" height="21" viewBox="0 0 21 21"><circle cx="8.400" cy="8.400" r="6.800" fill="none" stroke="#3f3a35" stroke-width="1.600"/><path d="M13.400 13.400 L19.400 19.400" stroke="#3f3a35" stroke-width="1.800"/></svg>
<div class="t" style="left:125px;top:311.63px;font-size:16.5px;color:#5f5a55;transform:scaleX(1.0089);transform-origin:0 0;">Filter</div>
<svg style="left:82.8px;top:382.5px;" width="11" height="6" viewBox="0 0 11 6"><path d="M0 0 H11 L5.500 6 Z" fill="#161513"/></svg>
<svg style="left:113px;top:377px;" width="19" height="19" viewBox="0 0 19 19"><rect x="1" y="1" width="17" height="12.400" rx="1.200" fill="none" stroke="#161513" stroke-width="1.800"/><path d="M9.500 13.400 V17.500 M4.800 17.700 H14.200" stroke="#161513" stroke-width="1.800" fill="none"/></svg>
<div class="t" style="left:140.9px;top:380.15px;font-size:16.6px;transform:scaleX(0.9682);transform-origin:0 0;">sample_demo_opa_app</div>
<svg style="left:328.7px;top:373.8px;" width="19" height="19" viewBox="0 0 19 19"><path d="M9.5 0.500 V18.5 M0.500 9.5 H18.5" stroke="#161513" stroke-width="2" fill="none"/></svg>
<svg style="left:106.8px;top:423px;" width="11" height="6" viewBox="0 0 11 6"><path d="M0 0 H11 L5.500 6 Z" fill="#161513"/></svg>
<svg style="left:138px;top:418px;" width="18" height="19" viewBox="0 0 18 19"><path d="M1 1 H8.600 L12.600 5 V14.200 H1 Z" fill="none" stroke="#161513" stroke-width="1.800" stroke-linejoin="round"/><path d="M4 6.400 H7.400 M4 9.800 H9.400" stroke="#161513" stroke-width="1.600"/><path d="M5.200 14.600 V17.800 H16.800 V8 H13" fill="none" stroke="#161513" stroke-width="1.800" stroke-linejoin="round"/></svg>
<div class="t" style="left:165.5px;top:419.65px;font-size:16.6px;">main</div>
<div class="t" style="left:214px;top:421.34px;font-size:14.6px;color:#5f5a55;transform:scaleX(1.0632);transform-origin:0 0;">default</div>
<svg style="left:328.7px;top:414.3px;" width="19" height="19" viewBox="0 0 19 19"><path d="M9.5 0.500 V18.5 M0.500 9.5 H18.5" stroke="#161513" stroke-width="2" fill="none"/></svg>
<div class="a" style="left:158px;top:452px;width:164px;height:32px;background:#e2eff5"></div>
<svg style="left:166px;top:457.7px;" width="15" height="18" viewBox="0 0 15 18"><path d="M1 1 H9.200 L14 5.800 V17 H1 Z M9 1.400 V6 H13.600" fill="none" stroke="#161513" stroke-width="1.800" stroke-linejoin="round"/></svg>
<div class="t" style="left:192.5px;top:460.65px;font-size:16.6px;transform:scaleX(1.0371);transform-origin:0 0;">main-start</div>
<div class="a" style="left:281.900px;top:452px;width:40.100px;height:32px;overflow:hidden">
<div class="t" style="left:0;top:10.34px;font-size:14.600px;color:#5f5a55;transform:scaleX(1.047);transform-origin:0 0">default</div>
<div class="a" style="left:34px;top:0;width:6.100px;height:32px;background:linear-gradient(90deg,rgba(226,239,245,0),#e2eff5 95%)"></div></div>
<svg style="left:109.5px;top:501.9px;" width="6" height="11" viewBox="0 0 6 11"><path d="M0 0 V11 L6 5.500 Z" fill="#161513"/></svg>
<svg style="left:137px;top:499px;" width="19" height="18" viewBox="0 0 19 18"><path d="M1 17 V1 H7.400 L9.400 4.200 H18 V17 Z" fill="none" stroke="#161513" stroke-width="1.800" stroke-linejoin="round"/></svg>
<div class="t" style="left:165.5px;top:500.55px;font-size:16.6px;transform:scaleX(0.9696);transform-origin:0 0;">Fragments</div>
<svg style="left:328.7px;top:495.0px;" width="19" height="19" viewBox="0 0 19 19"><path d="M9.5 0.500 V18.5 M0.500 9.5 H18.5" stroke="#161513" stroke-width="2" fill="none"/></svg>
<svg style="left:109.5px;top:542.9px;" width="6" height="11" viewBox="0 0 6 11"><path d="M0 0 V11 L6 5.500 Z" fill="#161513"/></svg>
<svg style="left:137px;top:539.8px;" width="19" height="18" viewBox="0 0 19 18"><path d="M1 17 V1 H7.400 L9.400 4.200 H18 V17 Z" fill="none" stroke="#161513" stroke-width="1.800" stroke-linejoin="round"/></svg>
<div class="t" style="left:165.5px;top:541.55px;font-size:16.6px;transform:scaleX(0.9303);transform-origin:0 0;">Resources</div>
<svg style="left:109.5px;top:582.8px;" width="6" height="11" viewBox="0 0 6 11"><path d="M0 0 V11 L6 5.500 Z" fill="#161513"/></svg>
<svg style="left:137px;top:579.8px;" width="19" height="18" viewBox="0 0 19 18"><path d="M1 17 V1 H7.400 L9.400 4.200 H18 V17 Z" fill="none" stroke="#161513" stroke-width="1.800" stroke-linejoin="round"/></svg>
<div class="t" style="left:165.5px;top:581.45px;font-size:16.6px;transform:scaleX(0.9329);transform-origin:0 0;">Root Pages</div>
<svg style="left:328.7px;top:575.9px;" width="19" height="19" viewBox="0 0 19 19"><path d="M9.5 0.500 V18.5 M0.500 9.5 H18.5" stroke="#161513" stroke-width="2" fill="none"/></svg>
<div class="a" style="left:54px;top:1066px;width:316px;height:14px;background:#e9e6e3"></div>
<div class="a" style="left:72px;top:1068.5px;width:269px;height:8px;background:#cbc7c3;border-radius:4px"></div>
<svg style="left:57px;top:1067.5px;" width="7" height="10" viewBox="0 0 7 10"><path d="M7 0 V10 L0 5 Z" fill="#d2ceca"/></svg>
<svg style="left:361px;top:1067.5px;" width="7" height="10" viewBox="0 0 7 10"><path d="M0 0 V10 L7 5 Z" fill="#d2ceca"/></svg>
<!-- ================= EDITOR TABS ================= -->
<div class="a" style="left:373px;top:247px;width:1547px;height:48px;background:#f1efed;border-bottom:1px solid #d9d5d0"></div>
<div class="a" style="left:373px;top:247px;width:174px;height:48px;background:#fbf9f8;border-right:1px solid #d9d5d0"></div>
<svg style="left:396px;top:258.6px;" width="15" height="18" viewBox="0 0 15 18"><path d="M1 1 H9.200 L14 5.800 V17 H1 Z M9 1.400 V6 H13.600" fill="none" stroke="#161513" stroke-width="1.800" stroke-linejoin="round"/></svg>
<div class="t" style="left:422.5px;top:261.95px;font-size:16.6px;transform:scaleX(1.0845);transform-origin:0 0;-webkit-text-stroke:.35px #161513;">main-start</div>
<svg style="left:514.5px;top:265.5px;" width="9" height="9" viewBox="0 0 9 9"><path d="M0.600 0.600 L8.400 8.400 M8.400 0.600 L0.600 8.400" stroke="#161513" stroke-width="1.500"/></svg>
<div class="a" style="left:373px;top:295px;width:1547px;height:50px;background:#fbf9f8;border-bottom:1px solid #e4e1dd"></div>
<div class="t" style="left:394.5px;top:310.12px;font-size:16.4px;font-weight:700;transform:scaleX(0.9484);transform-origin:0 0;">Page Designer</div>
<div class="a" style="left:394px;top:340px;width:109px;height:4px;background:#0f7799"></div>
<div class="t" style="left:535px;top:310.12px;font-size:16.4px;color:#3a3632;transform:scaleX(1.0283);transform-origin:0 0;-webkit-text-stroke:.3px #3a3632;">Action Chains</div>
<div class="t" style="left:643px;top:312.49px;font-size:13.6px;color:#3a3632;transform:scaleX(1.0226);transform-origin:0 0;">(1)</div>
<div class="t" style="left:692px;top:310.12px;font-size:16.4px;color:#3a3632;transform:scaleX(1.0267);transform-origin:0 0;-webkit-text-stroke:.3px #3a3632;">Event Listeners</div>
<div class="t" style="left:812px;top:312.49px;font-size:13.6px;color:#3a3632;transform:scaleX(1.0226);transform-origin:0 0;">(1)</div>
<div class="t" style="left:861px;top:310.12px;font-size:16.4px;color:#3a3632;-webkit-text-stroke:.3px #3a3632;">Events</div>
<div class="t" style="left:944px;top:310.12px;font-size:16.4px;color:#3a3632;transform:scaleX(1.0061);transform-origin:0 0;-webkit-text-stroke:.3px #3a3632;">Types</div>
<div class="t" style="left:992px;top:312.49px;font-size:13.6px;color:#3a3632;transform:scaleX(1.0226);transform-origin:0 0;">(1)</div>
<div class="t" style="left:1041px;top:310.12px;font-size:16.4px;color:#3a3632;transform:scaleX(1.0279);transform-origin:0 0;-webkit-text-stroke:.3px #3a3632;">Variables</div>
<div class="t" style="left:1114px;top:312.49px;font-size:13.6px;color:#3a3632;transform:scaleX(1.0226);transform-origin:0 0;">(2)</div>
<div class="a" style="left:1147.5px;top:303px;width:1.5px;height:28px;background:#cfcac5"></div>
<div class="t" style="left:1164px;top:310.12px;font-size:16.4px;color:#3a3632;transform:scaleX(1.0061);transform-origin:0 0;-webkit-text-stroke:.3px #3a3632;">JavaScript</div>
<div class="t" style="left:1273px;top:310.12px;font-size:16.4px;color:#3a3632;transform:scaleX(0.9607);transform-origin:0 0;-webkit-text-stroke:.3px #3a3632;">JSON</div>
<div class="a" style="left:1330.5px;top:303px;width:1.5px;height:28px;background:#cfcac5"></div>
<div class="t" style="left:1347px;top:310.12px;font-size:16.4px;color:#3a3632;transform:scaleX(1.0467);transform-origin:0 0;-webkit-text-stroke:.3px #3a3632;">Settings</div>
<!-- ================= LEFT VERTICAL TABS ================= -->
<div class="a" style="left:373px;top:345px;width:45px;height:735px;background:#f1efed;border-right:1px solid #e4e1dd"></div>
<div class="a" style="left:373px;top:491px;width:45px;height:80px;background:#fbf9f8;box-shadow:0 2px 5px rgba(0,0,0,.13),0 -2px 5px rgba(0,0,0,.10)"></div>
<div class="a" style="left:373px;top:486px;width:45px;height:5px;background:linear-gradient(180deg,rgba(241,239,237,0),rgba(0,0,0,.05))"></div>
<div class="t" style="left:395.8px;top:417.5px;font-size:15.6px;color:#5f5a55;transform:translate(-50%,-50%) rotate(-90deg) scaleX(1.0744);-webkit-text-stroke:.3px #5f5a55">Components</div>
<div class="t" style="left:395.8px;top:532.5px;font-size:15.6px;font-weight:700;transform:translate(-50%,-50%) rotate(-90deg) scaleX(1.0351);">Data</div>
<div class="t" style="left:395.8px;top:1023.8px;font-size:15.6px;color:#5f5a55;transform:translate(-50%,-50%) rotate(-90deg) scaleX(1.1188);-webkit-text-stroke:.3px #5f5a55">Structure</div>
<!-- ================= DATA PANEL ================= -->
<div class="a" style="left:418px;top:345px;width:215px;height:735px;background:#fbf9f8"></div>
<div class="inp" style="left:439px;top:354px;width:117px;height:38px"></div>
<svg style="left:452.5px;top:361px;" width="21" height="21" viewBox="0 0 21 21"><circle cx="8.400" cy="8.400" r="6.800" fill="none" stroke="#3f3a35" stroke-width="1.600"/><path d="M13.400 13.400 L19.400 19.400" stroke="#3f3a35" stroke-width="1.800"/></svg>
<div class="a" style="left:488.800px;top:363px;width:28px;height:22px;overflow:hidden"><div class="t" style="left:0;top:2.400px;font-size:16.500px;color:#5f5a55;transform:scaleX(.975);transform-origin:0 0">Filter</div></div>
<svg style="left:584.7px;top:363.5px;" width="19" height="19" viewBox="0 0 19 19"><path d="M14.600 14.400 A7 7 0 1 1 16.400 9.200" fill="none" stroke="#161513" stroke-width="1.900"/><path d="M12.600 8.600 L16.800 12.400 L19.400 7.600 Z" fill="#161513"/></svg>
<svg style="left:435.4px;top:416.8px;" width="6" height="11" viewBox="0 0 6 11"><path d="M0 0 V11 L6 5.500 Z" fill="#161513"/></svg>
<div class="t" style="left:465.7px;top:414.89px;font-size:16.2px;font-weight:700;transform:scaleX(0.9606);transform-origin:0 0;">Business Objects</div>
<svg style="left:435.4px;top:457.5px;" width="6" height="11" viewBox="0 0 6 11"><path d="M0 0 V11 L6 5.500 Z" fill="#161513"/></svg>
<div class="t" style="left:465.7px;top:455.59px;font-size:16.2px;font-weight:700;transform:scaleX(0.9698);transform-origin:0 0;">Services</div>
<!-- ================= CANVAS TOOLBAR ================= -->
<div class="a" style="left:633px;top:345px;width:1050px;height:56px;background:#fbf9f8;border-left:1px solid #e4e1dd"></div>
<svg style="left:653.7px;top:363.0px;" width="19" height="19" viewBox="0 0 19 19"><path d="M14.600 14.400 A7 7 0 1 1 16.400 9.200" fill="none" stroke="#161513" stroke-width="1.900"/><path d="M12.600 8.600 L16.800 12.400 L19.400 7.600 Z" fill="#161513"/></svg>
<div class="a" style="left:691px;top:358px;width:1px;height:29px;background:#d9d5d0"></div>
<svg style="left:709px;top:364px;" width="20" height="18" viewBox="0 0 20 18"><path d="M4.200 1 C1.200 5 1.200 13 4.200 17 M15.800 1 C18.800 5 18.800 13 15.800 17 M5.600 9 H14 M11 5.800 L14.200 9 L11 12.200" fill="none" stroke="#161513" stroke-width="1.700"/></svg>
<svg style="left:748px;top:363px;" width="18" height="20" viewBox="0 0 18 20"><circle cx="9" cy="5.400" r="3.900" fill="none" stroke="#161513" stroke-width="1.800"/><path d="M1.200 19.400 C1.200 11 16.800 11 16.800 19.400" fill="none" stroke="#161513" stroke-width="1.800"/></svg>
<div class="inp" style="left:776px;top:354px;width:156px;height:38px"></div>
<div class="t" style="left:793px;top:365.09px;font-size:16.2px;font-weight:700;transform:scaleX(0.9445);transform-origin:0 0;">Fit to Canvas</div>
<svg style="left:904.5px;top:369px;" width="11" height="6" viewBox="0 0 11 6"><path d="M0 0 H11 L5.500 6 Z" fill="#161513"/></svg>
<div class="inp" style="left:936px;top:354px;width:73px;height:38px"></div>
<div class="t" style="left:948px;top:364.92px;font-size:16.4px;color:#2b2825;transform:scaleX(1.0217);transform-origin:0 0;">auto</div>
<svg style="left:1016.5px;top:368px;" width="9" height="9" viewBox="0 0 9 9"><path d="M0.600 0.600 L8.400 8.400 M8.400 0.600 L0.600 8.400" stroke="#161513" stroke-width="1.400"/></svg>
<div class="inp" style="left:1034px;top:354px;width:72px;height:38px"></div>
<div class="t" style="left:1045px;top:364.92px;font-size:16.4px;color:#2b2825;transform:scaleX(1.0343);transform-origin:0 0;">auto</div>
<div class="t" style="left:1123.4px;top:365.09px;font-size:16.2px;font-weight:700;transform:scaleX(0.9757);transform-origin:0 0;">100%</div>
<svg style="left:1180.3px;top:369px;" width="11" height="6" viewBox="0 0 11 6"><path d="M0 0 H11 L5.500 6 Z" fill="#161513"/></svg>
<div class="a" style="left:1445px;top:354px;width:227px;height:38px;background:#dad7d5;border:1px solid #8b8580;border-radius:5px"></div>
<div class="a" style="left:1509px;top:355px;width:91px;height:36px;background:#fefdfc;border-left:1px solid #8b8580;border-right:1px solid #8b8580"></div>
<div class="t" style="left:1462.4px;top:366.35px;font-size:16.6px;color:#4a4643;transform:scaleX(1.0048);transform-origin:0 0;-webkit-text-stroke:.25px #4a4643;">Live</div>
<div class="t" style="left:1527px;top:366.35px;font-size:16.6px;transform:scaleX(0.9931);transform-origin:0 0;-webkit-text-stroke:.45px #161513;">Design</div>
<div class="t" style="left:1616.4px;top:366.35px;font-size:16.6px;color:#4a4643;transform:scaleX(0.9604);transform-origin:0 0;-webkit-text-stroke:.25px #4a4643;">Code</div>
<!-- ================= CANVAS ================= -->
<div class="a" style="left:633px;top:401px;width:1050px;height:648px;background:#e4e1dd;box-shadow:inset 8px 8px 10px -8px rgba(0,0,0,.12)"></div>
<div class="a" style="left:650px;top:420.5px;width:1015px;height:611.5px;background:#fbf9f8"></div>
<div class="a" style="left:650px;top:420.5px;width:1015px;height:70px;background:#f1efed;border-bottom:1px solid #d4cfca"></div>
<svg style="left:730px;top:436.5px;" width="34" height="36" viewBox="0 0 34 36"><path d="M17 1.800 L31.600 9.800 V26.200 L17 34.200 L2.400 26.200 V9.800 Z M2.800 10 L17 18 L31.200 10 M17 18 V34" fill="none" stroke="#8f5a12" stroke-width="3" stroke-linejoin="round"/></svg>
<div class="t" style="left:780px;top:444.6px;font-size:22.8px;transform:scaleX(1.0088);transform-origin:0 0;">My Application</div>
<svg style="left:1385px;top:441.5px;" width="27" height="27" viewBox="0 0 27 27"><path d="M11.49 5.14 L11.52 1.66 L15.48 1.66 L15.51 5.14 L17.99 6.17 L20.47 3.73 L23.27 6.53 L20.83 9.01 L21.86 11.49 L25.34 11.52 L25.34 15.48 L21.86 15.51 L20.83 17.99 L23.27 20.47 L20.47 23.27 L17.99 20.83 L15.51 21.86 L15.48 25.34 L11.52 25.34 L11.49 21.86 L9.01 20.83 L6.53 23.27 L3.73 20.47 L6.17 17.99 L5.14 15.51 L1.66 15.48 L1.66 11.52 L5.14 11.49 L6.17 9.01 L3.73 6.53 L6.53 3.73 L9.01 6.17 Z" fill="none" stroke="#161513" stroke-width="2.500" stroke-linejoin="miter"/><circle cx="13.500" cy="13.500" r="2.900" fill="none" stroke="#161513" stroke-width="2.500"/></svg>
<svg style="left:1445px;top:441px;" width="27" height="27" viewBox="0 0 27 27"><path d="M1.600 11.600 H6.800 L11.600 2.800 H13.600 L18.400 14.600 H24.600 V24.800 H3.900 Z M18.400 14.600 V24.800" fill="none" stroke="#161513" stroke-width="2.600" stroke-linejoin="miter"/></svg>
<svg style="left:1506.5px;top:442px;" width="21" height="25" viewBox="0 0 21 25"><path d="M1.400 1.400 H19.600 V23 L10.500 16.400 L1.400 23 Z" fill="none" stroke="#161513" stroke-width="2.600" stroke-linejoin="miter"/><path d="M10.500 4.600 V11.400 M7.100 8 H13.900" stroke="#161513" stroke-width="2.200"/></svg>
<div class="a" style="left:1551px;top:426px;width:59px;height:58px;background:#96502f;border-radius:7px;overflow:hidden"></div>
<svg style="left:1551px;top:426px;overflow:hidden;border-radius:6px" width="59" height="58" viewBox="0 0 59 58"><g fill="none" stroke="#763a1d" stroke-width="2.200" opacity=".75"><clipPath id="av1"><polygon points="0,0 59,0 59,20 30,36 0,30"/></clipPath><clipPath id="av2"><polygon points="0,30 30,36 59,20 59,58 0,58"/></clipPath><g clip-path="url(#av1)"><circle cx="2" cy="62" r="6.0"/><circle cx="2" cy="62" r="11.2"/><circle cx="2" cy="62" r="16.4"/><circle cx="2" cy="62" r="21.6"/><circle cx="2" cy="62" r="26.8"/><circle cx="2" cy="62" r="32.0"/><circle cx="2" cy="62" r="37.2"/><circle cx="2" cy="62" r="42.4"/><circle cx="2" cy="62" r="47.6"/><circle cx="2" cy="62" r="52.8"/><circle cx="2" cy="62" r="58.0"/><circle cx="2" cy="62" r="63.2"/><circle cx="2" cy="62" r="68.4"/><circle cx="2" cy="62" r="73.6"/><circle cx="2" cy="62" r="78.8"/><circle cx="2" cy="62" r="84.0"/></g><g clip-path="url(#av2)"><circle cx="64" cy="50" r="5.0"/><circle cx="64" cy="50" r="10.2"/><circle cx="64" cy="50" r="15.4"/><circle cx="64" cy="50" r="20.6"/><circle cx="64" cy="50" r="25.8"/><circle cx="64" cy="50" r="31.0"/><circle cx="64" cy="50" r="36.2"/><circle cx="64" cy="50" r="41.4"/><circle cx="64" cy="50" r="46.6"/><circle cx="64" cy="50" r="51.8"/><circle cx="64" cy="50" r="57.0"/><circle cx="64" cy="50" r="62.2"/></g></g></svg>
<svg style="left:1571px;top:445px;" width="19" height="20" viewBox="0 0 19 20"><circle cx="9.500" cy="5" r="3.600" fill="none" stroke="#fff" stroke-width="1.900"/><path d="M1.400 19.200 C1.400 10.600 17.600 10.600 17.600 19.200" fill="none" stroke="#fff" stroke-width="1.900"/></svg>
<div class="a" style="left:1650px;top:491px;width:15px;height:541px;background:#f1efed"></div>
<svg style="left:1653.5px;top:494px;" width="9" height="7" viewBox="0 0 9 7"><path d="M0 7 H9 L4.500 0 Z" fill="#d2ceca"/></svg>
<svg style="left:1653.5px;top:1020px;" width="9" height="7" viewBox="0 0 9 7"><path d="M0 0 H9 L4.500 7 Z" fill="#d2ceca"/></svg>
<div class="a" style="left:1653px;top:589.5px;width:9px;height:331px;background:#d3cfcc;border-radius:4.500px"></div>
<svg style="left:650px;top:527.500px;overflow:hidden" width="1000" height="15" viewBox="0 0 1000 15"><rect x="0" y="0" width="1000" height="15" fill="#426f7f"/><polygon points="-6,0 18,0 26,15 2,15" fill="#2f4852"/><polygon points="32,0 56,0 64,15 40,15" fill="#2f4852"/><polygon points="76,0 100,0 108,15 84,15" fill="#2f4852"/><polygon points="98,0 262,0 262,15 108,15" fill="#d8c2a0"/><polygon points="128,0 158,0 168,15 138,15" fill="#a88a62"/><polygon points="192,0 222,0 232,15 202,15" fill="#a88a62"/><polygon points="150,0 170,0 168,9" fill="#5b2b2a"/><polygon points="218,0 246,0 256,15 226,15" fill="#5b2b2a"/><polygon points="246,0 406,0 402,15 256,15" fill="#eee1c6"/><path d="M262 12 q10 -14 18 -4 t14 2 q8 -10 14 0 t16 -2 q8 -8 14 2 t16 0 q10 -10 16 0 t14 -2" fill="none" stroke="#bda781" stroke-width="1.400"/><polygon points="400,0 492,0 492,15 400,15" fill="#d2bc98"/><polygon points="418,0 432,0 440,15 426,15" fill="#87868f"/><polygon points="450,0 464,0 472,15 458,15" fill="#87868f"/><polygon points="486,0 550,0 538,15 474,15" fill="#8c4a23"/><polygon points="512,0 550,0 538,15 522,15" fill="#b45c2c"/><polygon points="550,0 706,0 706,15 538,15" fill="#efb356"/><path d="M560 14 L574 2" stroke="#a86a2e" stroke-width="1.300"/><path d="M582 14 L596 2" stroke="#a86a2e" stroke-width="1.300"/><path d="M604 14 L618 2" stroke="#a86a2e" stroke-width="1.300"/><path d="M626 14 L640 2" stroke="#a86a2e" stroke-width="1.300"/><path d="M648 14 L662 2" stroke="#a86a2e" stroke-width="1.300"/><path d="M670 14 L684 2" stroke="#a86a2e" stroke-width="1.300"/><path d="M692 14 L706 2" stroke="#a86a2e" stroke-width="1.300"/><polygon points="698,0 722,0 716,15 696,15" fill="#d9573c"/><polygon points="738,0 772,0 780,15 734,15" fill="#d9573c"/><polygon points="722,0 738,0 734,15 716,15" fill="#e9a04c"/><polygon points="766,0 1000,0 1000,15 776,15" fill="#426f7f"/><polygon points="790,0 806,0 816,15 798,15" fill="#2f4852"/><polygon points="818,0 834,0 844,15 826,15" fill="#2f4852"/><polygon points="846,0 862,0 872,15 854,15" fill="#2f4852"/><polygon points="884,0 900,0 910,15 892,15" fill="#2f4852"/><polygon points="916,0 932,0 942,15 924,15" fill="#2f4852"/><polygon points="958,0 974,0 984,15 966,15" fill="#2f4852"/><polygon points="986,0 1002,0 1012,15 994,15" fill="#2f4852"/></svg>
<div class="inp" style="left:871px;top:608px;width:435px;height:69.500px"></div>
<div class="t" style="left:888.1px;top:634.92px;font-size:18.4px;color:#625d58;transform:scaleX(0.9887);transform-origin:0 0;-webkit-text-stroke:.5px #625d58;">leaveType</div>
<div class="inp" style="left:871px;top:729px;width:435px;height:69.500px"></div>
<div class="t" style="left:888.1px;top:755.92px;font-size:18.4px;color:#625d58;transform:scaleX(1.0276);transform-origin:0 0;-webkit-text-stroke:.5px #625d58;">numberofDays</div>
<div class="a" style="left:870px;top:823px;width:80px;height:28px;background:#15759b;border-radius:4px 4px 0 0"></div>
<div class="t" style="left:878.9px;top:830.8px;font-size:13px;font-weight:700;color:#fff;">Input Text</div>
<div class="inp" style="left:871px;top:850px;width:435px;height:70px"></div>
<div class="a" style="left:870px;top:849px;width:436px;height:101.5px;border:1px dashed #15759b"></div>
<div class="t" style="left:888.1px;top:875.62px;font-size:18.4px;color:#625d58;transform:scaleX(1.0428);transform-origin:0 0;-webkit-text-stroke:.5px #625d58;">processDefinitionId</div>
<div class="a" style="left:726px;top:975px;width:84px;height:57px;overflow:hidden"><div class="a" style="left:0;top:0;width:84px;height:70px;background:#e7e4e1;border-radius:6px"></div></div>
<div class="t" style="left:748.3px;top:995.89px;font-size:18.2px;font-weight:700;transform:scaleX(0.9180);transform-origin:0 0;">Save</div>
<div class="a" style="left:675px;top:521px;width:745px;height:528px;border:6px solid #ff5400"></div>
<!-- ================= BREADCRUMBS ================= -->
<div class="a" style="left:633px;top:1049px;width:1050px;height:31px;background:#fbf9f8;border-left:1px solid #dcd8d4"></div>
<div class="a" style="left:1074px;top:1049px;width:90px;height:31px;background:#fff"></div>
<svg style="left:681.5px;top:1049px;" width="13" height="31" viewBox="0 0 13 31"><path d="M0.500 -0.500 L12 15.500 L0.500 31.500" fill="none" stroke="#e0dcd8" stroke-width="2"/></svg>
<svg style="left:765.5px;top:1049px;" width="13" height="31" viewBox="0 0 13 31"><path d="M0.500 -0.500 L12 15.500 L0.500 31.500" fill="none" stroke="#e0dcd8" stroke-width="2"/></svg>
<svg style="left:837.5px;top:1049px;" width="13" height="31" viewBox="0 0 13 31"><path d="M0.500 -0.500 L12 15.500 L0.500 31.500" fill="none" stroke="#e0dcd8" stroke-width="2"/></svg>
<svg style="left:967.5px;top:1049px;" width="13" height="31" viewBox="0 0 13 31"><path d="M0.500 -0.500 L12 15.500 L0.500 31.500" fill="none" stroke="#e0dcd8" stroke-width="2"/></svg>
<svg style="left:1073.5px;top:1049px;" width="13" height="31" viewBox="0 0 13 31"><path d="M0.500 -0.500 L12 15.500 L0.500 31.500" fill="#fbf9f8" stroke="#e0dcd8" stroke-width="2"/></svg>
<svg style="left:1163.5px;top:1049px;" width="13" height="31" viewBox="0 0 13 31"><path d="M0.500 -0.500 L12 15.500 L0.500 31.500" fill="#fff" stroke="#e0dcd8" stroke-width="2"/></svg>
<div class="t" style="left:646.5px;top:1057.92px;font-size:13.8px;color:#0f6f92;transform:scaleX(0.9400);transform-origin:0 0;">Page</div>
<div class="t" style="left:705px;top:1057.92px;font-size:13.8px;color:#0f6f92;transform:scaleX(0.9513);transform-origin:0 0;">Grid Row</div>
<div class="t" style="left:788.4px;top:1057.92px;font-size:13.8px;color:#0f6f92;">Cell [6]</div>
<div class="t" style="left:860px;top:1057.92px;font-size:13.8px;color:#0f6f92;">Validation Group</div>
<div class="t" style="left:990.5px;top:1057.92px;font-size:13.8px;color:#0f6f92;">Form Layout</div>
<div class="t" style="left:1096px;top:1057.92px;font-size:13.8px;transform:scaleX(1.0289);transform-origin:0 0;">Input Text</div>
<svg style="left:1611px;top:1055px;" width="16" height="18" viewBox="0 0 16 18"><circle cx="8" cy="10.400" r="6.300" fill="none" stroke="#161513" stroke-width="1.700"/><path d="M5 1.200 H11 M8 10.400 L10.800 7.400 M13.200 4.400 L14.800 6" stroke="#161513" stroke-width="1.700" fill="none"/></svg>
<div class="t" style="left:1634px;top:1057.92px;font-size:13.8px;transform:scaleX(0.9656);transform-origin:0 0;">2.48 s</div>
<!-- ================= PROPERTIES ================= -->
<div class="a" style="left:1683px;top:345px;width:191px;height:735px;background:#fbf9f8;border-left:1px solid #cfcac5"></div>
<div class="a" style="left:1874px;top:345px;width:46px;height:735px;background:#f1efed"></div>
<div class="a" style="left:1874px;top:458px;width:1px;height:622px;background:#dcd8d4"></div>
<div class="a" style="left:1874px;top:345px;width:46px;height:113px;background:#fbf9f8;box-shadow:0 5px 6px -3px rgba(0,0,0,.22)"></div>
<div class="t" style="left:1895.2px;top:400px;font-size:15.8px;transform:translate(-50%,-50%) rotate(90deg) scaleX(1.0764);-webkit-text-stroke:.35px #161513">Properties</div>
<svg style="left:1710px;top:368.5px;" width="8" height="13" viewBox="0 0 8 13"><path d="M7 0.800 L1.400 6.500 L7 12.200" fill="none" stroke="#0f7799" stroke-width="1.900"/></svg>
<div class="t" style="left:1732.7px;top:368.44px;font-size:17.2px;transform:scaleX(1.0227);transform-origin:0 0;">Input Text</div>
<div class="t" style="left:1703.3px;top:414.09px;font-size:16.2px;font-weight:700;transform:scaleX(0.9536);transform-origin:0 0;">General</div>
<div class="t" style="left:1781.8px;top:413.92px;font-size:16.4px;color:#5f5a55;transform:scaleX(0.9877);transform-origin:0 0;">Data</div>
<div class="a" style="left:1837px;top:410px;width:37px;height:24px;overflow:hidden"><div class="t" style="left:0;top:3.92px;font-size:16.400px;color:#5f5a55">Events</div></div>
<div class="a" style="left:1703px;top:445.5px;width:171px;height:1px;background:#e0dcd8"></div>
<div class="a" style="left:1703px;top:442.5px;width:58px;height:3.5px;background:#0f7799"></div>
<div class="t" style="left:1703.4px;top:467.29px;font-size:16.2px;font-weight:700;transform:scaleX(0.9637);transform-origin:0 0;">ID</div>
<div class="inp" style="left:1703px;top:494px;width:180px;height:38px;border-right:0;border-radius:5px 0 0 5px;width:171px"></div>
<div class="t" style="left:1703.4px;top:561.59px;font-size:16.2px;font-weight:700;transform:scaleX(0.9437);transform-origin:0 0;">Label</div>
<div class="t" style="left:1703.4px;top:580.99px;font-size:16.2px;font-weight:700;transform:scaleX(0.9883);transform-origin:0 0;">Hint</div>
<div class="inp" style="left:1703px;top:614.500px;width:171px;height:37.500px;border-color:#a8682a;border-right:0;border-radius:5px 0 0 5px"></div>
<div class="t" style="left:1715.3px;top:624.95px;font-size:16.6px;color:#2b2825;transform:scaleX(0.9956);transform-origin:0 0;">processDefinitionId</div>
<div class="t" style="left:1703.4px;top:683.69px;font-size:16.2px;font-weight:700;transform:scaleX(0.9442);transform-origin:0 0;">Placehold</div>
<div class="t" style="left:1703.4px;top:703.09px;font-size:16.2px;font-weight:700;transform:scaleX(0.9535);transform-origin:0 0;">er</div>
<div class="inp" style="left:1703px;top:736px;width:171px;height:38px;border-right:0;border-radius:5px 0 0 5px"></div>
<div class="a" style="left:1703.5px;top:801.5px;width:15.5px;height:15.5px;border:1.500px solid #3a3632;border-radius:2.500px;background:#fbf9f8"></div>
<div class="t" style="left:1727.8px;top:800.72px;font-size:16.4px;color:#2b2825;transform:scaleX(0.9742);transform-origin:0 0;">Required</div>
<div class="a" style="left:1703.5px;top:853.5px;width:15.5px;height:15.5px;border:1.500px solid #3a3632;border-radius:2.500px;background:#fbf9f8"></div>
<div class="t" style="left:1727.8px;top:852.82px;font-size:16.4px;color:#2b2825;transform:scaleX(0.9721);transform-origin:0 0;">Disabled</div>
<div class="a" style="left:1703.5px;top:906.5px;width:15.5px;height:15.5px;border:1.500px solid #3a3632;border-radius:2.500px;background:#fbf9f8"></div>
<div class="t" style="left:1727.8px;top:905.62px;font-size:16.4px;color:#2b2825;transform:scaleX(0.9673);transform-origin:0 0;">Readonly</div>
<div class="t" style="left:1703.4px;top:956.59px;font-size:16.2px;font-weight:700;transform:scaleX(0.9351);transform-origin:0 0;">Clear Icon</div>
<div class="a" style="left:1704px;top:989px;width:158px;height:28.500px;overflow:hidden"><div class="a" style="left:0;top:0;width:190px;height:28.500px;background:#d8d4d1;border:1px solid #8b8580;border-radius:5px"></div><div class="a" style="left:86px;top:0;width:1px;height:28.500px;background:#8b8580"></div></div>
<div class="t" style="left:1722px;top:995.02px;font-size:16.4px;color:#4a4643;transform:scaleX(0.9919);transform-origin:0 0;">Always</div>
<div class="t" style="left:1807.8px;top:995.02px;font-size:16.4px;color:#4a4643;transform:scaleX(1.0347);transform-origin:0 0;">Conditi</div>
<div class="a" style="left:1854px;top:990px;width:8px;height:26.5px;background:linear-gradient(90deg,rgba(216,212,209,0),#d8d4d1)"></div>
<div class="t" style="left:1703.4px;top:1042.99px;font-size:16.2px;font-weight:700;">Virtual</div>
<div class="a" style="left:1684px;top:1066px;width:190px;height:14px;background:#eceae7"></div>
<div class="a" style="left:1701px;top:1068.5px;width:112px;height:8px;background:#cbc7c3;border-radius:4px"></div>
<svg style="left:1687.5px;top:1067.5px;" width="7" height="10" viewBox="0 0 7 10"><path d="M7 0 V10 L0 5 Z" fill="#d2ceca"/></svg>
<svg style="left:1862.5px;top:1067.5px;" width="7" height="10" viewBox="0 0 7 10"><path d="M0 0 V10 L7 5 Z" fill="#d2ceca"/></svg>
<!-- ================= FOOTER ================= -->
<div class="a" style="left:0px;top:1080px;width:1920px;height:48px;background:#f1efed;border-top:1px solid #a9a49f"></div>
<svg style="left:18px;top:1095px;" width="19" height="19" viewBox="0 0 19 19"><path d="M10 17.600 H1 V1 H16.800 V9" fill="none" stroke="#161513" stroke-width="1.800"/><path d="M4 5.400 H5.800 M7.600 5.400 H14 M4 9 H5.800 M7.600 9 H11 M4 12.600 H5.800" stroke="#161513" stroke-width="1.600"/><path d="M14.400 11.400 L18.600 18.600 H10.200 Z" fill="#161513"/></svg>
<div class="t" style="left:53.6px;top:1098.95px;font-size:16.6px;color:#4f4a46;transform:scaleX(1.0125);transform-origin:0 0;">Audits</div>
<svg style="left:135.5px;top:1094px;" width="20" height="20" viewBox="0 0 20 20"><circle cx="8" cy="8" r="6.400" fill="none" stroke="#161513" stroke-width="2.100"/><path d="M12.600 12.600 L18.600 18.600" stroke="#161513" stroke-width="2.300"/></svg>
<div class="t" style="left:171.3px;top:1098.95px;font-size:16.6px;color:#4f4a46;transform:scaleX(0.9748);transform-origin:0 0;">Find in Files</div>
<svg style="left:294px;top:1095px;" width="19" height="19" viewBox="0 0 19 19"><path d="M11 17.600 H1 V1 H16.800 V10" fill="none" stroke="#161513" stroke-width="1.800"/><path d="M4 5.400 H5.800 M7.600 5.400 H14 M4 9 H5.800 M7.600 9 H12 M4 12.600 H5.800 M7.600 12.600 H10" stroke="#161513" stroke-width="1.600"/><circle cx="15.400" cy="15.200" r="3.400" fill="#161513"/></svg>
<div class="t" style="left:329.2px;top:1098.95px;font-size:16.6px;color:#4f4a46;transform:scaleX(0.9838);transform-origin:0 0;">Logs</div>
<svg style="left:400px;top:1095px;" width="19" height="19" viewBox="0 0 19 19"><path d="M1 0 V18 H18.600" fill="none" stroke="#161513" stroke-width="1.800"/><path d="M4 3.400 H14.600 M4 7.200 H11 M6.600 11 H18 M4 14.600 H14.600" stroke="#161513" stroke-width="1.700"/></svg>
<div class="t" style="left:435.7px;top:1098.95px;font-size:16.6px;color:#4f4a46;transform:scaleX(0.9327);transform-origin:0 0;">Trace</div>
<svg style="left:510px;top:1094.5px;" width="18" height="20" viewBox="0 0 18 20"><path d="M5.800 1 H12.200 M7 1 V6.800 L1.800 15.400 C0.800 17.400 2 18.800 3.800 18.800 H14.200 C16 18.800 17.200 17.400 16.200 15.400 L11 6.800 V1" fill="none" stroke="#161513" stroke-width="1.800" stroke-linejoin="round"/><circle cx="7.400" cy="14.400" r="1.100" fill="#161513"/><circle cx="10.800" cy="12" r="1.100" fill="#161513"/></svg>
<div class="t" style="left:546px;top:1098.95px;font-size:16.6px;color:#4f4a46;transform:scaleX(0.9630);transform-origin:0 0;">Tests</div>
<div class="t" style="left:1785px;top:1097.72px;font-size:16.4px;color:#2b2825;transform:scaleX(0.9869);transform-origin:0 0;">Saved 11:33 PM</div>
</div>
</body>
</html>
